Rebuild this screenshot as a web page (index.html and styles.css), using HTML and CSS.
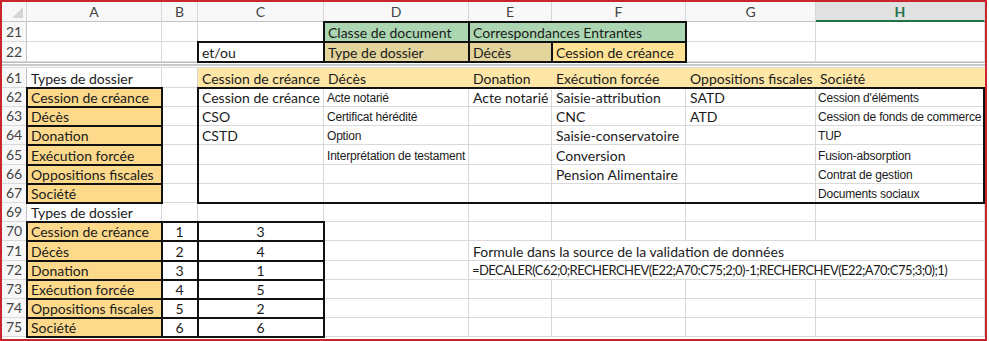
FILE: index.html
```html
<!DOCTYPE html>
<html>
  <head>
    <title>Types de dossier</title>
    <meta http-equiv="content-type" content="text/html;charset=utf-8">
    <link rel="stylesheet" href="styles.css">
  </head>
  <body>
    <div class="frame">
      <div class="sheet">
        <!-- column headers -->
        <div class="hd corner"><span class="tri"></span></div>
        <div class="hd">A</div>
        <div class="hd">B</div>
        <div class="hd">C</div>
        <div class="hd">D</div>
        <div class="hd">E</div>
        <div class="hd">F</div>
        <div class="hd">G</div>
        <div class="hd sel">H</div>

        <!-- 21 -->
        <div class="c rh">21</div>
        <div class="c"></div>
        <div class="c"></div>
        <div class="c"></div>
        <div class="c grn">Classe de document</div>
        <div class="c grn m2">Correspondances Entrantes</div>
        <div class="c"></div>
        <div class="c"></div>

        <!-- 22 -->
        <div class="c rh">22</div>
        <div class="c"></div>
        <div class="c"></div>
        <div class="c">et/ou</div>
        <div class="c kha">Type de dossier</div>
        <div class="c kha">Décès</div>
        <div class="c yel">Cession de créance</div>
        <div class="c"></div>
        <div class="c"></div>

        <div class="split"></div>

        <!-- 61 -->
        <div class="c rh">61</div>
        <div class="c">Types de dossier</div>
        <div class="c"></div>
        <div class="c pale">Cession de créance</div>
        <div class="c pale">Décès</div>
        <div class="c pale">Donation</div>
        <div class="c pale">Exécution forcée</div>
        <div class="c pale">Oppositions fiscales</div>
        <div class="c pale">Société</div>

        <!-- 62 -->
        <div class="c rh">62</div>
        <div class="c org">Cession de créance</div>
        <div class="c"></div>
        <div class="c">Cession de créance</div>
        <div class="c ar">Acte notarié</div>
        <div class="c">Acte notarié</div>
        <div class="c">Saisie-attribution</div>
        <div class="c">SATD</div>
        <div class="c ar last">Cession d'éléments</div>

        <!-- 63 -->
        <div class="c rh">63</div>
        <div class="c org">Décès</div>
        <div class="c"></div>
        <div class="c">CSO</div>
        <div class="c ar">Certificat hérédité</div>
        <div class="c"></div>
        <div class="c">CNC</div>
        <div class="c">ATD</div>
        <div class="c ar last">Cession de fonds de commerce</div>

        <!-- 64 -->
        <div class="c rh">64</div>
        <div class="c org">Donation</div>
        <div class="c"></div>
        <div class="c">CSTD</div>
        <div class="c ar">Option</div>
        <div class="c"></div>
        <div class="c">Saisie-conservatoire</div>
        <div class="c"></div>
        <div class="c ar last">TUP</div>

        <!-- 65 -->
        <div class="c rh">65</div>
        <div class="c org">Exécution forcée</div>
        <div class="c"></div>
        <div class="c"></div>
        <div class="c ar">Interprétation de testament</div>
        <div class="c"></div>
        <div class="c">Conversion</div>
        <div class="c"></div>
        <div class="c ar last">Fusion-absorption</div>

        <!-- 66 -->
        <div class="c rh">66</div>
        <div class="c org">Oppositions fiscales</div>
        <div class="c"></div>
        <div class="c"></div>
        <div class="c"></div>
        <div class="c"></div>
        <div class="c">Pension Alimentaire</div>
        <div class="c"></div>
        <div class="c ar last">Contrat de gestion</div>

        <!-- 67 -->
        <div class="c rh">67</div>
        <div class="c org">Société</div>
        <div class="c"></div>
        <div class="c"></div>
        <div class="c"></div>
        <div class="c"></div>
        <div class="c"></div>
        <div class="c"></div>
        <div class="c ar last">Documents sociaux</div>

        <!-- 69 -->
        <div class="c rh">69</div>
        <div class="c">Types de dossier</div>
        <div class="c"></div>
        <div class="c"></div>
        <div class="c"></div>
        <div class="c"></div>
        <div class="c"></div>
        <div class="c"></div>
        <div class="c"></div>

        <!-- 70 -->
        <div class="c rh">70</div>
        <div class="c org">Cession de créance</div>
        <div class="c ctr">1</div>
        <div class="c ctr">3</div>
        <div class="c"></div>
        <div class="c"></div>
        <div class="c"></div>
        <div class="c"></div>
        <div class="c"></div>

        <!-- 71 -->
        <div class="c rh">71</div>
        <div class="c org">Décès</div>
        <div class="c ctr">2</div>
        <div class="c ctr">4</div>
        <div class="c"></div>
        <div class="c m4">Formule dans la source de la validation de données</div>

        <!-- 72 -->
        <div class="c rh">72</div>
        <div class="c org">Donation</div>
        <div class="c ctr">3</div>
        <div class="c ctr">1</div>
        <div class="c"></div>
        <div class="c m4 fx">=DECALER(C62;0;RECHERCHEV(E22;A70:C75;2;0)-1;RECHERCHEV(E22;A70:C75;3;0);1)</div>

        <!-- 73 -->
        <div class="c rh">73</div>
        <div class="c org">Exécution forcée</div>
        <div class="c ctr">4</div>
        <div class="c ctr">5</div>
        <div class="c"></div>
        <div class="c"></div>
        <div class="c"></div>
        <div class="c"></div>
        <div class="c"></div>

        <!-- 74 -->
        <div class="c rh">74</div>
        <div class="c org">Oppositions fiscales</div>
        <div class="c ctr">5</div>
        <div class="c ctr">2</div>
        <div class="c"></div>
        <div class="c"></div>
        <div class="c"></div>
        <div class="c"></div>
        <div class="c"></div>

        <!-- 75 -->
        <div class="c rh">75</div>
        <div class="c org">Société</div>
        <div class="c ctr">6</div>
        <div class="c ctr">6</div>
        <div class="c"></div>
        <div class="c"></div>
        <div class="c"></div>
        <div class="c"></div>
        <div class="c"></div>
      </div>

      <!-- black cell borders, drawn over the grid lines -->
      <div class="lines">
        <i class="ln y3 x4"></i>
        <i class="ln y2 x5"></i>
        <i class="ln y2 x6 w2"></i>
        <i class="ln y3 x5"></i>
        <i class="ln y3 x6"></i>
        <i class="ln y3 x7"></i>

        <i class="ln y6 x2"></i>
        <i class="ln y7 x2"></i>
        <i class="ln y8 x2"></i>
        <i class="ln y9 x2"></i>
        <i class="ln y10 x2"></i>
        <i class="ln y11 x2"></i>
        <i class="ln big y6 x4 w6 h6"></i>

        <i class="ln y13 x2 w3"></i>
        <i class="ln y14 x2 w3"></i>
        <i class="ln y15 x2 w3"></i>
        <i class="ln y16 x2 w3"></i>
        <i class="ln y17 x2 w3"></i>
        <i class="ln y18 x2 w3"></i>
        <i class="ln y13 x3 h6"></i>
      </div>
    </div>
  </body>
</html>
```

FILE: styles.css
```css
* {
  box-sizing: border-box;
}

body {
  margin: 0;
  background: #fff;
  font: 14px/17px Lato, "Liberation Sans", sans-serif;
  color: #1b1b1b;
}

.frame {
  display: grid;
  width: 987px;
  height: 341px;
  border: 2px solid #c9252c;
  background: #fff;
  overflow: hidden;
}

.sheet,
.lines {
  grid-area: 1 / 1;
  align-self: start;
  display: grid;
  grid-template-columns: 25px 135px 36px 126px 145px 83px 134px 130px 169px;
  grid-template-rows: 20px 20px 20px 6px 20px 19px 19px 19px 20px 19px 19px 19px 19px 20px 19px 19px 19px 19px;
}

.lines {
  pointer-events: none;
}

/* headers */
.hd {
  display: flex;
  align-items: center;
  justify-content: center;
  color: #444;
  background: #f8f8f8;
  border-right: 1px solid #d6d6d6;
  border-bottom: 1px solid #c4c4c4;
}

.hd.sel {
  color: #217346;
  font-weight: bold;
  background: #e1e1e1;
  border-bottom: 2px solid #217346;
}

.corner {
  justify-content: flex-end;
  align-items: flex-end;
  padding: 0 3px 3px 0;
}

.tri {
  border-style: solid;
  border-width: 0 0 11px 11px;
  border-color: transparent transparent #d4d4d4;
}

.split {
  grid-column: 1 / -1;
  background: linear-gradient(#bdbdbd 0 1px, #fff 1px 2px, #c9c9c9 2px 4px, #fff 4px 5px, #d9d9d9 5px);
}

/* cells */
.c {
  display: flex;
  align-items: flex-end;
  min-width: 0;
  padding: 0 4px;
  white-space: nowrap;
  border-right: 1px solid #d9d9d9;
  border-bottom: 1px solid #d9d9d9;
}

.rh {
  justify-content: center;
  padding: 0 0 1px;
  color: #444;
  background: #f8f8f8;
  border-right-color: #c4c4c4;
}

.ar {
  padding-left: 3px;
  font: 12px/15px "Liberation Sans", Arial, sans-serif;
  letter-spacing: -0.2px;
}

.ar.last {
  padding-left: 2px;
}

.fx {
  padding-left: 3px;
  font-size: 13px;
  letter-spacing: -0.55px;
}

.ctr {
  justify-content: center;
}

.m2 {
  grid-column: span 2;
}

.m4 {
  grid-column: span 4;
}

.grn,
.kha,
.yel,
.org,
.pale {
  border-color: transparent;
}

.grn { background: #acd6b1; }
.kha { background: #e3d49b; }
.yel { background: #ffe294; }
.org { background: #fdd98b; }
.pale { background: #fde6a6; }

/* black borders */
.ln {
  margin: -1px;
  border: 2px solid #111;
}

.ln.big {
  margin-right: 0;
}

.x2 { grid-column-start: 2; }
.x3 { grid-column-start: 3; }
.x4 { grid-column-start: 4; }
.x5 { grid-column-start: 5; }
.x6 { grid-column-start: 6; }
.x7 { grid-column-start: 7; }
.w2 { grid-column-end: span 2; }
.w3 { grid-column-end: span 3; }
.w6 { grid-column-end: span 6; }

.y2 { grid-row-start: 2; }
.y3 { grid-row-start: 3; }
.y6 { grid-row-start: 6; }
.y7 { grid-row-start: 7; }
.y8 { grid-row-start: 8; }
.y9 { grid-row-start: 9; }
.y10 { grid-row-start: 10; }
.y11 { grid-row-start: 11; }
.y13 { grid-row-start: 13; }
.y14 { grid-row-start: 14; }
.y15 { grid-row-start: 15; }
.y16 { grid-row-start: 16; }
.y17 { grid-row-start: 17; }
.y18 { grid-row-start: 18; }
.h6 { grid-row-end: span 6; }
```
